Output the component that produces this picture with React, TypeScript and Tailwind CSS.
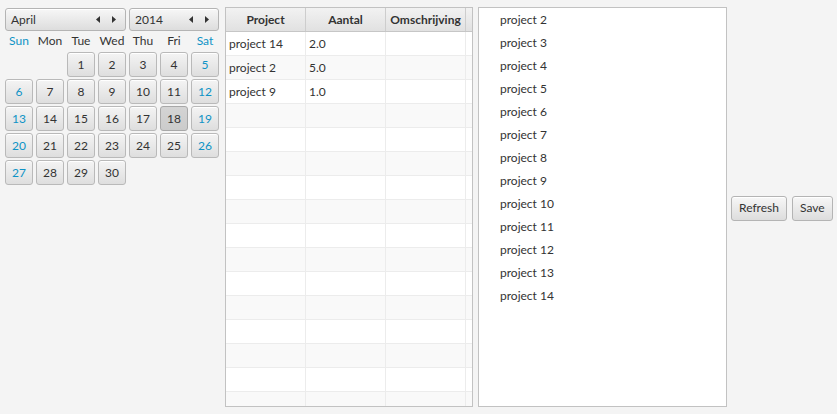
import React from 'react';

const FONT = { fontFamily: 'Lato, "Open Sans", sans-serif' };

const btn =
  'border border-[#b4b4b4] rounded-[3px] bg-gradient-to-b from-[#f7f7f7] to-[#dddddd] shadow-[inset_0_1px_0_#ffffff]';

function Arrows() {
  return (
    <div className="flex items-center gap-[12px]">
      <svg width="4" height="7" viewBox="0 0 4 7">
        <path d="M4 0 L0 3.5 L4 7 Z" fill="#333" />
      </svg>
      <svg width="4" height="7" viewBox="0 0 4 7">
        <path d="M0 0 L4 3.5 L0 7 Z" fill="#333" />
      </svg>
    </div>
  );
}

function Spinner({ label, width }: { label: string; width: string }) {
  return (
    <div className={`${btn} ${width} h-[23px] flex items-center justify-between pl-[5px] pr-[9px] text-[#333]`}>
      <span>{label}</span>
      <Arrows />
    </div>
  );
}

const days = ['Sun', 'Mon', 'Tue', 'Wed', 'Thu', 'Fri', 'Sat'];

function Calendar() {
  const cells: (number | null)[] = [null, null];
  for (let d = 1; d <= 30; d++) cells.push(d);
  return (
    <div className="w-[214px] flex flex-col">
      <div className="flex gap-[3px]">
        <Spinner label="April" width="w-[121px]" />
        <Spinner label="2014" width="w-[90px]" />
      </div>
      <div className="grid grid-cols-7 gap-x-[3px] mt-[3px] h-[14px] items-center">
        {days.map((d, i) => (
          <div key={d} className={`text-center ${i === 0 || i === 6 ? 'text-[#0e93c6]' : 'text-[#333]'}`}>
            {d}
          </div>
        ))}
      </div>
      <div className="grid grid-cols-7 gap-x-[3px] gap-y-[2px] mt-[4px]">
        {cells.map((c, i) =>
          c === null ? (
            <div key={i} className="h-[25px]" />
          ) : (
            <div
              key={i}
              className={`h-[25px] flex items-center justify-center rounded-[3px] border ${
                c === 18
                  ? 'border-[#a8a8a8] bg-gradient-to-b from-[#d4d4d4] to-[#cbcbcb]'
                  : 'border-[#b9b9b9] bg-gradient-to-b from-[#f4f4f4] to-[#dedede] shadow-[inset_0_1px_0_#ffffff]'
              } ${i % 7 === 0 || i % 7 === 6 ? 'text-[#0e93c6]' : 'text-[#333]'}`}
            >
              {c}
            </div>
          )
        )}
      </div>
    </div>
  );
}

const rows = [
  ['project 14', '2.0'],
  ['project 2', '5.0'],
  ['project 9', '1.0'],
];

function Table() {
  const all = Array.from({ length: 16 }, (_, i) => rows[i] ?? ['', '']);
  return (
    <div className="w-[248px] h-[400px] border border-[#c2c2c2] bg-white flex flex-col overflow-hidden">
      <div className="flex h-[24px] shrink-0 bg-gradient-to-b from-[#f2f2f2] to-[#e1e1e1] border-b border-[#c6c6c6] font-bold text-[#333]">
        <div className="w-[80px] flex items-center justify-center border-r border-[#cdcdcd]">Project</div>
        <div className="w-[80px] flex items-center justify-center border-r border-[#cdcdcd]">Aantal</div>
        <div className="w-[80px] flex items-center justify-center border-r border-[#cdcdcd]">Omschrijving</div>
        <div className="flex-1" />
      </div>
      {all.map((r, i) => (
        <div
          key={i}
          className={`flex h-[24px] shrink-0 border-b border-[#ececec] text-[#333] ${i % 2 === 1 ? 'bg-[#f9f9f9]' : 'bg-white'}`}
        >
          <div className="w-[80px] flex items-center pl-[3px] border-r border-[#ececec]">{r[0]}</div>
          <div className="w-[80px] flex items-center pl-[3px] border-r border-[#ececec]">{r[1]}</div>
          <div className="w-[80px] border-r border-[#ececec]" />
          <div className="flex-1" />
        </div>
      ))}
    </div>
  );
}

function ProjectList() {
  const items = Array.from({ length: 13 }, (_, i) => `project ${i + 2}`);
  return (
    <div className="w-[249px] h-[400px] border border-[#c2c2c2] bg-white">
      {items.map((t) => (
        <div key={t} className="h-[23px] flex items-center pl-[21px] text-[#333]">
          {t}
        </div>
      ))}
    </div>
  );
}

export default function App() {
  return (
    <div className="w-[837px] h-[414px] bg-[#f4f4f4] text-[12px] leading-none" style={FONT}>
      <div className="flex pl-[5px] pt-[7px]">
        <div className="pt-[1px] mr-[6px]">
          <Calendar />
        </div>
        <Table />
        <div className="ml-[5px]">
          <ProjectList />
        </div>
        <div className="flex items-center gap-[5px] pl-[4px] h-[400px] pt-[2px]">
          <div className={`${btn} h-[25px] px-[7px] flex items-center text-[#333]`}>Refresh</div>
          <div className={`${btn} h-[25px] px-[7px] flex items-center text-[#333]`}>Save</div>
        </div>
      </div>
    </div>
  );
}
